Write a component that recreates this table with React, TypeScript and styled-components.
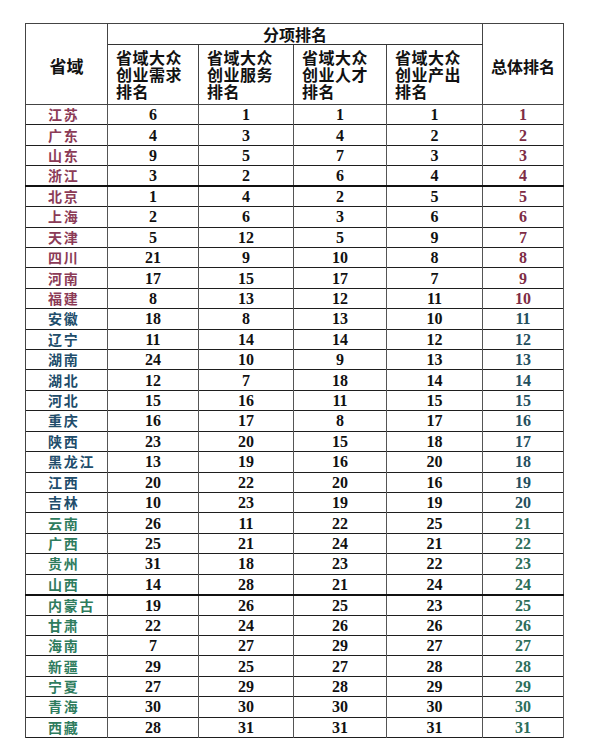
import React from 'react';
import styled, { createGlobalStyle } from 'styled-components';

const GlobalStyle = createGlobalStyle`
    html, body {
        margin: 0;
        padding: 0;
        background: #ffffff;
    }
`

type Row = [string, number, number, number, number, number]

const rows: Row[] = [
    ['江苏', 6, 1, 1, 1, 1],
    ['广东', 4, 3, 4, 2, 2],
    ['山东', 9, 5, 7, 3, 3],
    ['浙江', 3, 2, 6, 4, 4],
    ['北京', 1, 4, 2, 5, 5],
    ['上海', 2, 6, 3, 6, 6],
    ['天津', 5, 12, 5, 9, 7],
    ['四川', 21, 9, 10, 8, 8],
    ['河南', 17, 15, 17, 7, 9],
    ['福建', 8, 13, 12, 11, 10],
    ['安徽', 18, 8, 13, 10, 11],
    ['辽宁', 11, 14, 14, 12, 12],
    ['湖南', 24, 10, 9, 13, 13],
    ['湖北', 12, 7, 18, 14, 14],
    ['河北', 15, 16, 11, 15, 15],
    ['重庆', 16, 17, 8, 17, 16],
    ['陕西', 23, 20, 15, 18, 17],
    ['黑龙江', 13, 19, 16, 20, 18],
    ['江西', 20, 22, 20, 16, 19],
    ['吉林', 10, 23, 19, 19, 20],
    ['云南', 26, 11, 22, 25, 21],
    ['广西', 25, 21, 24, 21, 22],
    ['贵州', 31, 18, 23, 22, 23],
    ['山西', 14, 28, 21, 24, 24],
    ['内蒙古', 19, 26, 25, 23, 25],
    ['甘肃', 22, 24, 26, 26, 26],
    ['海南', 7, 27, 29, 27, 27],
    ['新疆', 29, 25, 27, 28, 28],
    ['宁夏', 27, 29, 28, 29, 29],
    ['青海', 30, 30, 30, 30, 30],
    ['西藏', 28, 31, 31, 31, 31],
]

const subHeads = ['省域大众创业需求排名', '省域大众创业服务排名', '省域大众创业人才排名', '省域大众创业产出排名']

// colour by tier: top 10 red, 11-20 blue, 21+ green
const tierColor = (rank: number) => {
    if (rank <= 10) return '#8c3b57'
    if (rank <= 20) return '#214d6b'
    return '#2f7c5e'
}
const rankColor = (rank: number) => {
    if (rank <= 10) return '#7e2c45'
    if (rank <= 20) return '#244f5e'
    return '#2d6e5a'
}

const App = () => {
    return (
        <>
            <GlobalStyle />
            <Page>
                <Table>
                    <colgroup>
                        <col style={{ width: 82 }} />
                        <col style={{ width: 91 }} />
                        <col style={{ width: 95 }} />
                        <col style={{ width: 93 }} />
                        <col style={{ width: 96 }} />
                        <col style={{ width: 81 }} />
                    </colgroup>
                    <thead>
                        <TopRow>
                            <MainHead rowSpan={2}>省域</MainHead>
                            <GroupHead colSpan={4}>分项排名</GroupHead>
                            <MainHead rowSpan={2} small>总体排名</MainHead>
                        </TopRow>
                        <SubRow>
                            {subHeads.map(text => (
                                <SubHead key={text}>
                                    <HeadText>{text}</HeadText>
                                </SubHead>
                            ))}
                        </SubRow>
                    </thead>
                    <tbody>
                        {rows.map((r, i) => (
                            <DataRow key={r[0]} thick={i === 3 || i === 23}>
                                <NameCell color={tierColor(r[5])}>{r[0]}</NameCell>
                                <NumCell>{r[1]}</NumCell>
                                <NumCell>{r[2]}</NumCell>
                                <NumCell>{r[3]}</NumCell>
                                <NumCell>{r[4]}</NumCell>
                                <RankCell color={rankColor(r[5])}>{r[5]}</RankCell>
                            </DataRow>
                        ))}
                    </tbody>
                </Table>
            </Page>
        </>
    );
};

export default App;

const Page = styled.div`
    padding: 23px 0 0 25px;
    width: 590px;
    box-sizing: border-box;
`

const Table = styled.table`
    width: 538px;
    table-layout: fixed;
    border-collapse: collapse;
    border: 1.5px solid #2a2a2a;
    font-family: "Noto Sans CJK SC", "Noto Sans", sans-serif;
    color: #111;
`

const TopRow = styled.tr`
    height: 21px;
`

const SubRow = styled.tr`
    height: 60px;
`

const MainHead = styled.th<{ small?: boolean }>`
    border: 1px solid #444;
    font-weight: 700;
    font-size: ${p => (p.small ? '16px' : '17px')};
    line-height: 20px;
    text-align: center;
    vertical-align: middle;
    padding: 4px 0 0;
`

const GroupHead = styled.th`
    border: 1px solid #444;
    border-bottom: 1.5px solid #333;
    font-weight: 700;
    font-size: 16px;
    line-height: 19px;
    text-align: center;
    padding: 0;
`

const SubHead = styled.th`
    border: 1px solid #444;
    text-align: left;
    vertical-align: top;
    padding: 4px 0 0 8px;
`

// one text wrapped to four characters a line
const HeadText = styled.div`
    width: 70px;
    font-weight: 700;
    font-size: 16px;
    line-height: 17px;
    letter-spacing: 0.5px;
    word-break: break-all;
`

const DataRow = styled.tr<{ thick?: boolean }>`
    height: 20.42px;
    border-bottom: ${p => (p.thick ? '2px solid #111' : '1.5px solid #1e1e1e')};
`

const NameCell = styled.td<{ color: string }>`
    border-left: 1px solid #444;
    border-right: 1px solid #555;
    padding: 0 0 0 22px;
    font-weight: 700;
    font-size: 14px;
    line-height: 19px;
    letter-spacing: 1.8px;
    color: ${p => p.color};
    white-space: nowrap;
`

const NumCell = styled.td`
    border-right: 1px solid #555;
    padding: 0;
    text-align: center;
    font-family: "Liberation Serif", "Times New Roman", serif;
    font-weight: 700;
    font-size: 16px;
    line-height: 19px;
    color: #111;
`

const RankCell = styled(NumCell)<{ color: string }>`
    color: ${p => p.color};
`
